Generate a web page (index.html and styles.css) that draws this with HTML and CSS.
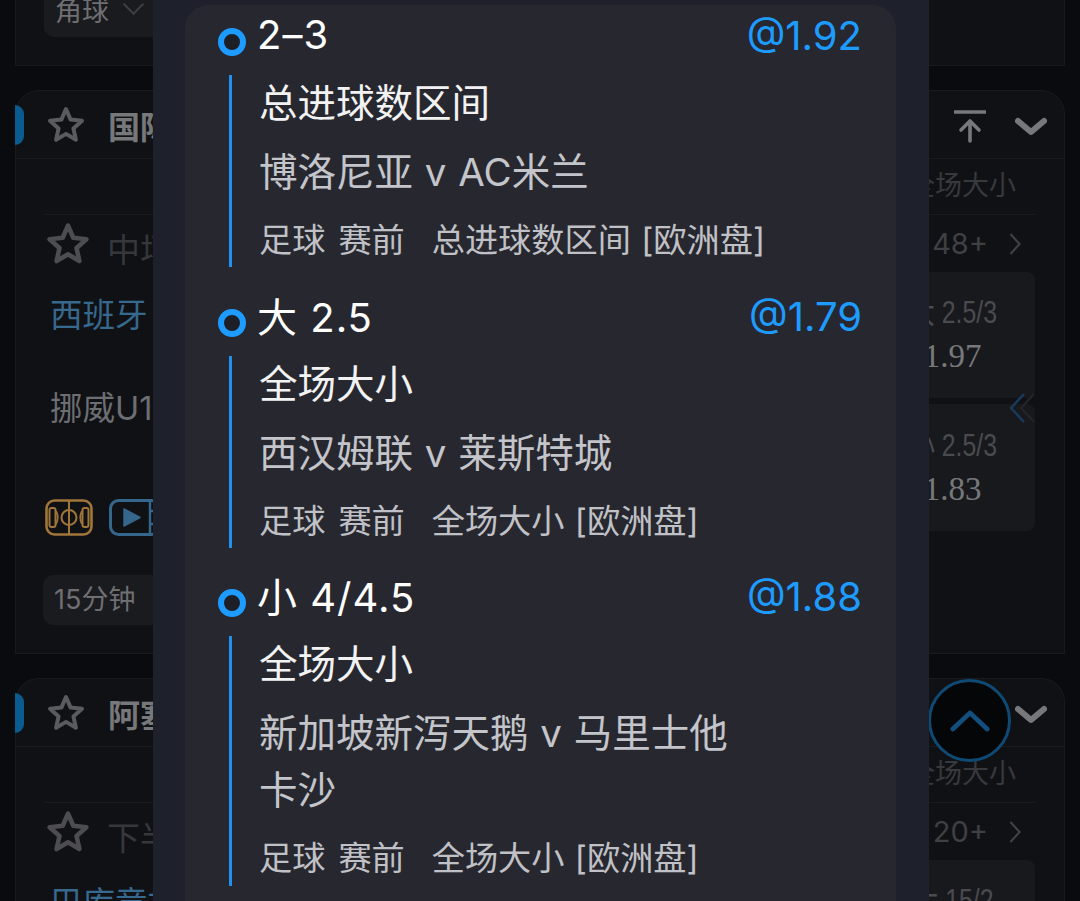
FILE: index.html
```html
<!DOCTYPE html>
<html lang="zh-CN">
  <head>
    <meta charset="UTF-8" />
    <meta name="viewport" content="width=device-width, initial-scale=1.0" />
    <title>投注单</title>
    <link rel="stylesheet" href="styles.css">
  </head>
  <body>
    <svg class="defs" width="0" height="0">
      <symbol id="star" viewBox="0 0 40 40">
        <path d="M20 4 L24.6 14.6 L36 15.8 L27.4 23.4 L29.9 34.8 L20 28.9 L10.1 34.8 L12.6 23.4 L4 15.8 L15.4 14.6 Z" fill="none" stroke="currentColor" stroke-width="4" stroke-linejoin="round" />
      </symbol>
      <symbol id="chevron" viewBox="0 0 32 20">
        <path d="M3 4 L16 15 L29 4" fill="none" stroke="currentColor" stroke-width="6" stroke-linecap="round" stroke-linejoin="round" />
      </symbol>
      <symbol id="small-right" viewBox="0 0 12 24">
        <path d="M1.5 2 L10.5 12 L1.5 22" fill="none" stroke="currentColor" stroke-width="2.2" />
      </symbol>
    </svg>

    <div class="page">
      <section class="card card-short">
        <div class="chip">角球 <span class="chip-arrow"></span></div>
      </section>

      <section class="card">
        <header class="card-header">
          <span class="tab"></span>
          <svg class="star"><use href="#star" /></svg>
          <span class="league">国际</span>
          <div class="header-icons">
            <svg class="to-top" viewBox="0 0 32 34">
              <path d="M1 2 H31" stroke="currentColor" stroke-width="3.6" stroke-linecap="round" />
              <path d="M16 31 V12 M7 20 L16 11 L25 20" fill="none" stroke="currentColor" stroke-width="3.6" stroke-linecap="round" stroke-linejoin="round" />
            </svg>
            <svg class="chevron"><use href="#chevron" /></svg>
          </div>
        </header>
        <div class="card-body">
          <div class="market-label">全场大小</div>
          <div class="league-row">
            <div class="row-start">
              <svg class="star star-row"><use href="#star" /></svg>
              <span class="stage">中场</span>
            </div>
            <div class="more">48+ <svg class="more-arrow"><use href="#small-right" /></svg></div>
          </div>
          <div class="match">
            <div class="teams">
              <div class="team team-home">西班牙</div>
              <div class="team team-away">挪威U19</div>
              <div class="match-icons">
                <svg class="field-icon" viewBox="0 0 48 37">
                  <rect x="1.5" y="1.5" width="45" height="34" rx="8" fill="none" stroke="currentColor" stroke-width="2.6" />
                  <path d="M24 1.5 V35.5" fill="none" stroke="currentColor" stroke-width="2" />
                  <rect x="4.5" y="9" width="6" height="19" rx="2" fill="none" stroke="currentColor" stroke-width="2" />
                  <rect x="37.5" y="9" width="6" height="19" rx="2" fill="none" stroke="currentColor" stroke-width="2" />
                  <path d="M11 12 Q14.5 18.5 11 25 M37 12 Q33.5 18.5 37 25" fill="none" stroke="currentColor" stroke-width="1.8" />
                  <circle cx="24" cy="18.5" r="7.5" fill="none" stroke="currentColor" stroke-width="2" />
                </svg>
                <svg class="play-icon" viewBox="0 0 52 37">
                  <rect x="1.5" y="1.5" width="49" height="34" rx="8" fill="none" stroke="currentColor" stroke-width="3" />
                  <path d="M41 1.5 V35.5 M41 12 H50 M41 25 H50" fill="none" stroke="currentColor" stroke-width="2.4" />
                  <path d="M15 10 L31 18.5 L15 27 Z" fill="currentColor" stroke="currentColor" stroke-width="1.5" stroke-linejoin="round" />
                </svg>
              </div>
              <div class="chip chip-time">15分钟</div>
            </div>
            <div class="odds">
              <div class="odd">
                <span class="odd-line">大 2.5/3</span>
                <span class="odd-price">1.97</span>
              </div>
              <div class="odd">
                <span class="odd-line">小 2.5/3</span>
                <span class="odd-price">1.83</span>
              </div>
              <svg class="odds-prev" viewBox="0 0 26 30">
                <path d="M15 1 L2 15 L15 29" fill="none" stroke="#1b3b5e" stroke-width="2.4" />
                <path d="M25 1 L12 15 L25 29" fill="none" stroke="#232529" stroke-width="2.2" />
              </svg>
            </div>
          </div>
        </div>
      </section>

      <section class="card">
        <header class="card-header">
          <span class="tab"></span>
          <svg class="star"><use href="#star" /></svg>
          <span class="league">阿塞</span>
          <div class="header-icons">
            <svg class="chevron"><use href="#chevron" /></svg>
          </div>
        </header>
        <div class="card-body">
          <div class="market-label">全场大小</div>
          <div class="league-row">
            <div class="row-start">
              <svg class="star star-row"><use href="#star" /></svg>
              <span class="stage">下半</span>
            </div>
            <div class="more">20+ <svg class="more-arrow"><use href="#small-right" /></svg></div>
          </div>
          <div class="match">
            <div class="teams">
              <div class="team team-home">巴库竞技</div>
            </div>
            <div class="odds">
              <div class="odd">
                <span class="odd-line">大 15/2</span>
              </div>
            </div>
          </div>
        </div>
      </section>
    </div>

    <div class="back-top">
      <svg viewBox="0 0 42 26"><path d="M3 22 L21 5 L39 22" fill="none" stroke="currentColor" stroke-width="5" stroke-linecap="round" stroke-linejoin="round" /></svg>
    </div>

    <div class="sheet">
      <div class="sheet-card">
        <div class="bet">
          <div class="bet-title">
            <span class="ring"></span>
            <span class="pick">2–3</span>
            <span class="price">@1.92</span>
          </div>
          <div class="bet-body">
            <div class="bet-market">总进球数区间</div>
            <div class="bet-match">博洛尼亚 v AC米兰</div>
            <div class="bet-meta"><span>足球</span><span>赛前</span><span>总进球数区间 [欧洲盘]</span></div>
          </div>
        </div>
        <div class="bet">
          <div class="bet-title">
            <span class="ring"></span>
            <span class="pick">大 2.5</span>
            <span class="price">@1.79</span>
          </div>
          <div class="bet-body">
            <div class="bet-market">全场大小</div>
            <div class="bet-match">西汉姆联 v 莱斯特城</div>
            <div class="bet-meta"><span>足球</span><span>赛前</span><span>全场大小 [欧洲盘]</span></div>
          </div>
        </div>
        <div class="bet">
          <div class="bet-title">
            <span class="ring"></span>
            <span class="pick">小 4/4.5</span>
            <span class="price">@1.88</span>
          </div>
          <div class="bet-body">
            <div class="bet-market">全场大小</div>
            <div class="bet-match">新加坡新泻天鹅 v 马里士他卡沙</div>
            <div class="bet-meta"><span>足球</span><span>赛前</span><span>全场大小 [欧洲盘]</span></div>
          </div>
        </div>
      </div>
    </div>
  </body>
</html>
```

FILE: styles.css
```css
* {
  box-sizing: border-box;
}

html,
body {
  margin: 0;
  height: 901px;
  overflow: hidden;
}

body {
  position: relative;
  font-family: Inter, "Noto Sans CJK SC", sans-serif;
  background: #0a0b0e;
}

.defs {
  position: absolute;
}

.page {
  height: 901px;
  padding: 0 15px;
  overflow: hidden;
  display: flex;
  flex-direction: column;
  gap: 24px;
}

.card {
  flex: none;
  height: 564px;
  background: #101115;
  border: 1px solid #191a1e;
  border-radius: 24px 24px 0 0;
}

.card:last-child {
  height: 240px;
  flex-grow: 1;
  border-bottom: 0;
}

.card-short {
  height: 66px;
  padding: 0 28px 28px;
  border-top: 0;
  border-radius: 0;
  display: flex;
  align-items: flex-end;
}

.chip {
  height: 50px;
  width: 130px;
  margin-top: -14px;
  padding-left: 11px;
  background: #1a1b1f;
  border-radius: 10px;
  color: #6f6f72;
  font-size: 27px;
  line-height: 50px;
}

.chip-arrow {
  display: inline-block;
  width: 15px;
  height: 15px;
  margin: 0 0 9px 9px;
  border-right: 2px solid #3f4043;
  border-bottom: 2px solid #3f4043;
  transform: rotate(45deg);
}

.card-header {
  height: 68px;
  padding-right: 17px;
  display: flex;
  align-items: center;
  border-bottom: 1px solid #1a1b1f;
}

.tab {
  width: 9px;
  height: 40px;
  margin-left: -1px;
  background: #0a5b8f;
  border-radius: 0 9px 9px 0;
}

.star {
  width: 40px;
  height: 40px;
  margin-left: 22px;
  color: #5b5b5e;
}

.league {
  margin-left: 22px;
  color: #77787a;
  font-size: 32px;
  font-weight: 700;
}

.header-icons {
  margin: 4px 0 0 auto;
  display: flex;
  align-items: center;
  gap: 29px;
}

.to-top {
  width: 32px;
  height: 34px;
  color: #77787a;
}

.chevron {
  width: 32px;
  height: 20px;
  color: #77787a;
}

.card-body {
  padding: 0 29px;
}

.market-label {
  height: 56px;
  padding-right: 19px;
  border-bottom: 1px solid #1a1b1f;
  text-align: right;
  color: #38393c;
  font-size: 27px;
  line-height: 54px;
}

.league-row {
  height: 57px;
  display: flex;
  justify-content: space-between;
  align-items: center;
}

.row-start {
  display: flex;
  align-items: center;
}

.star-row {
  width: 46px;
  height: 46px;
  margin: 0;
  color: #4d4d50;
}

.stage {
  margin: 8px 0 0 16px;
  color: #36373a;
  font-size: 33px;
}

.more {
  padding-right: 14px;
  display: flex;
  align-items: center;
  gap: 21px;
  color: #3f4043;
  font-size: 29px;
}

.more-arrow {
  width: 12px;
  height: 24px;
  color: #3f4043;
}

.match {
  display: flex;
  justify-content: space-between;
}

.teams {
  padding-top: 21px;
}

.team {
  margin-left: 5px;
  font-size: 32.5px;
  line-height: 46px;
}

.team-home {
  color: #37688d;
}

.team-away {
  margin-top: 47px;
  color: #6d6e72;
}

.match-icons {
  margin-top: 67px;
  display: flex;
  gap: 16px;
}

.field-icon {
  width: 48px;
  height: 37px;
  color: #a0763a;
}

.play-icon {
  width: 52px;
  height: 37px;
  color: #35668c;
}

.chip-time {
  margin: 39px 0 0 -2px;
}

.odds {
  position: relative;
  width: 165px;
  display: flex;
  flex-direction: column;
  gap: 6px;
}

.odd {
  height: 126px;
  padding-top: 22px;
  background: #18191d;
  border-radius: 8px;
  text-align: center;
}

.odd + .odd {
  height: 127px;
  padding-top: 23px;
}

.odd-line {
  display: block;
  margin-left: 2px;
  color: #4a4b4e;
  font-family: "Liberation Sans", "Noto Sans CJK SC", sans-serif;
  font-size: 31px;
  line-height: 38px;
  transform: scaleX(0.8);
}

.odd-price {
  display: block;
  margin-top: 2px;
  color: #77787a;
  font-family: "Liberation Serif", serif;
  font-size: 33px;
  line-height: 44px;
}

.odds-prev {
  position: absolute;
  top: 121px;
  right: 0;
  width: 26px;
  height: 30px;
}

.back-top {
  position: absolute;
  left: 928px;
  top: 679px;
  width: 83px;
  height: 83px;
  display: flex;
  align-items: center;
  justify-content: center;
  background: #050608;
  border: 3px solid #0f4a75;
  border-radius: 50%;
  color: #124f7e;
}

.back-top svg {
  width: 40px;
  height: 25px;
}

.sheet {
  position: absolute;
  left: 153px;
  top: 0;
  width: 776px;
  height: 901px;
  padding: 5px 33px 0 32px;
  background: #1e212b;
}

.sheet-card {
  height: 896px;
  padding: 3px 34px 0 33px;
  background: #27282f;
  border-radius: 24px 24px 0 0;
}

.bet {
  height: 281px;
}

.bet:nth-child(2) {
  height: 280px;
}

.bet:last-child {
  height: auto;
}

.bet-title {
  height: 56px;
  display: flex;
  align-items: center;
  color: #fff;
  font-size: 40px;
}

.ring {
  flex: none;
  width: 28px;
  height: 28px;
  margin: 12px 11px 0 0;
  background: #1e1f26;
  border: 6.5px solid #1e9bff;
  border-radius: 50%;
}

.pick {
  flex: 1;
  margin-bottom: 4px;
  letter-spacing: 1px;
}

.price {
  margin-bottom: 2px;
  color: #1e9bff;
}

.bet-body {
  height: 192px;
  margin: 11px 0 0 11px;
  padding-left: 27px;
  border-left: 3px solid #1e92ee;
  font-size: 38.5px;
  line-height: 57px;
}

.bet:last-child .bet-body {
  height: 250px;
}

.bet-market {
  height: 57px;
  color: #f2f2f3;
}

.bet-match {
  max-width: 490px;
  margin-top: 12px;
  color: #c4c5ca;
  word-spacing: 1px;
}

.bet-meta {
  margin-top: 15px;
  color: #c0c1c6;
  font-size: 33.2px;
  line-height: 48px;
  display: flex;
}

.bet-meta span {
  margin-right: 13px;
}

.bet-meta span:nth-child(2) {
  margin-right: 27px;
}

.bet-meta span:last-child {
  word-spacing: 1px;
}
```
